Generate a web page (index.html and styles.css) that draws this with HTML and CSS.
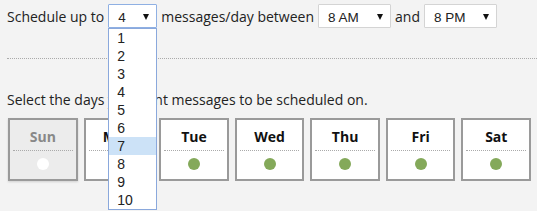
FILE: index.html
```html
<!DOCTYPE html>
<html lang="en">
<head>
    <meta charset="UTF-8">
    <title>Schedule</title>
    <link rel="stylesheet" href="styles.css">
</head>
<body>
    <div class="limits">
        <span>Schedule up to</span>
        <span class="pick pick-open">
            <select class="pick-count"><option>4</option></select>
            <ul class="pick-list">
                <li>1</li>
                <li>2</li>
                <li>3</li>
                <li>4</li>
                <li>5</li>
                <li>6</li>
                <li class="hover">7</li>
                <li>8</li>
                <li>9</li>
                <li>10</li>
            </ul>
        </span>
        <span>messages/day between</span>
        <span class="pick">
            <select class="pick-time"><option>8 AM</option></select>
        </span>
        <span>and</span>
        <span class="pick">
            <select class="pick-time"><option>8 PM</option></select>
        </span>
    </div>

    <hr class="divider">

    <p class="hint">Select the days you want messages to be scheduled on.</p>

    <div class="days">
        <div class="day off"><div class="day-name">Sun</div><div class="dot"></div></div>
        <div class="day"><div class="day-name">Mon</div><div class="dot"></div></div>
        <div class="day"><div class="day-name">Tue</div><div class="dot"></div></div>
        <div class="day"><div class="day-name">Wed</div><div class="dot"></div></div>
        <div class="day"><div class="day-name">Thu</div><div class="dot"></div></div>
        <div class="day"><div class="day-name">Fri</div><div class="dot"></div></div>
        <div class="day"><div class="day-name">Sat</div><div class="dot"></div></div>
    </div>
</body>
</html>
```

FILE: styles.css
```css
html {
    height: 100%;
}

body {
    box-sizing: border-box;
    min-height: 100%;
    margin: 0;
    padding: 4px 0 0 7px;
    background: #f3f3f3;
    font-family: "Open Sans", sans-serif;
    font-size: 14px;
    color: #222;
}

.limits {
    display: flex;
    align-items: center;
    gap: 4px;
    height: 24px;
}

.pick {
    position: relative;
    display: inline-block;
}

.pick select {
    -webkit-appearance: none;
    appearance: none;
    display: block;
    height: 24px;
    margin: 0;
    padding: 2px 0 0 9px;
    border: 1px solid #d4d4d4;
    border-radius: 1px;
    background: #fff;
    font-family: "Liberation Sans", Arial, sans-serif;
    font-size: 13.5px;
    color: #222;
}

.pick::after {
    content: "";
    position: absolute;
    right: 8px;
    top: 10px;
    border-left: 3.5px solid transparent;
    border-right: 3.5px solid transparent;
    border-top: 6px solid #111;
    pointer-events: none;
}

.pick-count {
    width: 49px;
}

.pick-time {
    width: 73px;
}

.pick-open select {
    border-color: #8fb0e3;
}

.pick-list {
    position: absolute;
    top: 24px;
    left: 0;
    width: 47px;
    margin: 0;
    padding: 0;
    list-style: none;
    background: #fff;
    border: 1px solid #8aa8dc;
    font-family: "Liberation Sans", Arial, sans-serif;
    font-size: 14px;
    z-index: 5;
}

.pick-list li {
    height: 18px;
    line-height: 18px;
    padding-left: 8px;
}

.pick-list .hover {
    background: #cce2f7;
}

.divider {
    margin: 30px 0 0 0;
    border: 0;
    border-top: 1px dotted #aaa;
}

.hint {
    margin: 31px 0 0 0;
    line-height: 20px;
}

.days {
    display: flex;
    gap: 6px;
    margin: 8px 6px 0 1px;
}

.day {
    flex: 1;
    height: 59px;
    padding: 0 3px;
    background: #fff;
    border: 2px solid #9a9a9a;
    text-align: center;
}

.day-name {
    padding: 7px 0 4px;
    line-height: 19px;
    font-weight: bold;
    color: #111;
    border-bottom: 1px dotted #aaa;
}

.dot {
    width: 12px;
    height: 12px;
    margin: 7px auto 0;
    border-radius: 50%;
    background: #84a95a;
}

.day.off {
    background: #ececec;
    box-shadow: 0 1px 2px rgba(0, 0, 0, 0.15);
}

.day.off .day-name {
    color: #888;
}

.day.off .dot {
    background: #fff;
}
```
